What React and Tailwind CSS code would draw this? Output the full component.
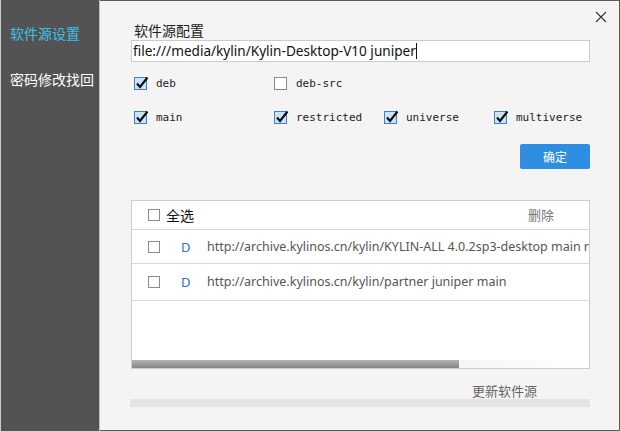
import React from "react";

const cjk = { fontFamily: '"Noto Sans CJK SC", "Noto Sans", sans-serif' };
const latin = { fontFamily: '"Noto Sans", "Noto Sans CJK SC", sans-serif' };
const mono = { fontFamily: '"DejaVu Sans Mono", "Liberation Mono", monospace' };

const repos = [
  "http://archive.kylinos.cn/kylin/KYLIN-ALL 4.0.2sp3-desktop main restricted universe multiverse",
  "http://archive.kylinos.cn/kylin/partner juniper main",
];

function BlueCheck({ checked }) {
  if (!checked) {
    return <span className="block w-[13px] h-[13px] border border-[#8a8a8a] bg-white shrink-0" />;
  }
  return (
    <span className="relative block w-[13px] h-[13px] border border-[#3f80c6] bg-[#cfe3f7] shrink-0">
      <svg className="absolute -left-[1px] -top-[3px]" width="16" height="16" viewBox="0 0 16 16">
        <path d="M3 8.5 L6 12 L13.5 2.5" fill="none" stroke="#111" strokeWidth="2.2" />
      </svg>
    </span>
  );
}

function Opt({ label, checked, w }) {
  return (
    <div className={`flex items-center gap-[9px] ${w}`}>
      <BlueCheck checked={checked} />
      <span className="text-[11px] leading-[13px] text-[#222]" style={mono}>
        {label}
      </span>
    </div>
  );
}

function Box() {
  return <span className="block w-[12px] h-[12px] border border-[#8c8c8c] bg-white shrink-0" />;
}

export default function App() {
  return (
    <div className="w-[620px] h-[431px] flex bg-[#f4f4f4]" style={cjk}>
      <aside className="w-[100px] h-full bg-[#535353] border-l border-l-[#c9c9c9] border-r border-r-[#bdbdbd] pl-[9px] pt-[23px]">
        <div className="text-[14px] leading-[20px] text-[#3cc0ea]">软件源设置</div>
        <div className="text-[14px] leading-[20px] text-white mt-[26px]">密码修改找回</div>
      </aside>

      <main className="relative flex-1 h-full border-t border-r border-b border-[#5a5a5a] pl-[31px]">
        <button className="absolute right-[12px] top-[10px] w-[12px] h-[12px]">
          <svg width="12" height="12" viewBox="0 0 12 12">
            <path d="M1 1 L11 11 M11 1 L1 11" stroke="#333" strokeWidth="1.1" />
          </svg>
        </button>

        <div className="pt-[19px] pl-[3px] text-[14px] leading-[20px] text-[#222]">软件源配置</div>

        <div className="w-[459px] h-[22px] bg-white border border-[#cccccc] flex items-center pl-[1px]">
          <span className="text-[13.6px] leading-[20px] text-[#111]" style={latin}>
            file:///media/kylin/Kylin-Desktop-V10 juniper
          </span>
          <span className="block w-px h-[16px] bg-[#111]" />
        </div>

        <div className="pl-[3px] mt-[15px] flex">
          <Opt label="deb" checked w="w-[140px]" />
          <Opt label="deb-src" checked={false} w="w-[110px]" />
        </div>

        <div className="pl-[3px] mt-[21px] flex">
          <Opt label="main" checked w="w-[140px]" />
          <Opt label="restricted" checked w="w-[110px]" />
          <Opt label="universe" checked w="w-[110px]" />
          <Opt label="multiverse" checked w="w-[100px]" />
        </div>

        <div className="w-[459px] flex justify-end mt-[20px]">
          <button className="w-[70px] h-[25px] rounded-[2px] bg-[#2f8de2] text-white text-[12px] leading-[25px]">
            确定
          </button>
        </div>

        <div className="w-[459px] h-[169px] mt-[31px] bg-white border border-[#cdcdcd] flex flex-col overflow-hidden">
          <div className="h-[29px] flex items-center border-b border-[#d4d4d4] pl-[16px] pr-[35px] shrink-0">
            <Box />
            <span className="ml-[6px] text-[14px] leading-[20px] text-[#111]">全选</span>
            <span className="ml-auto text-[13px] leading-[18px] text-[#777]">删除</span>
          </div>
          {repos.map((r, i) => (
            <div
              key={i}
              className={`flex items-center border-b border-[#d8d8d8] pl-[16px] shrink-0 overflow-hidden whitespace-nowrap ${
                i === 0 ? "h-[34px]" : "h-[37px]"
              }`}
            >
              <Box />
              <span className="ml-[21px] w-[26px] shrink-0 text-[13px] leading-[18px] text-[#2c6fc0]" style={latin}>
                D
              </span>
              <span className="shrink-0 text-[12.5px] leading-[18px] text-[#555]" style={latin}>
                {r}
              </span>
            </div>
          ))}
          <div className="flex-1" />
          <div className="h-[8px] flex shrink-0 bg-gradient-to-r from-[#d3dae2] to-white">
            <div className="w-[327px] h-full bg-gradient-to-b from-[#b4b4b4] to-[#858585]" />
          </div>
        </div>

        <div className="w-[459px] flex justify-end pr-[53px] mt-[13px]">
          <span className="text-[13px] leading-[17px] text-[#666]">更新软件源</span>
        </div>

        <div className="w-[460px] -ml-[1px] h-[8px] bg-[#e3e3e3]" />
      </main>
    </div>
  );
}
